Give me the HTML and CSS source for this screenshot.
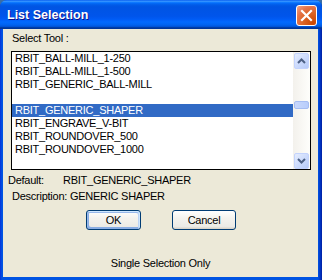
FILE: index.html
```html
<!DOCTYPE html>
<html>
<head>
<meta charset="utf-8">
<link rel="stylesheet" href="styles.css">
</head>
<body>
<div class="window">
  <div class="titlebar">
    <span class="title">List Selection</span>
    <div class="close">
      <svg width="13" height="13" viewBox="0 0 13 13"><path d="M2 2 L11 11 M11 2 L2 11" stroke="#fff" stroke-width="2.2" stroke-linecap="square"/></svg>
    </div>
  </div>
  <div class="content">
    <div class="label">Select Tool :</div>
    <div class="listbox">
      <div class="rows">
        <div class="row">RBIT_BALL-MILL_1-250</div>
        <div class="row">RBIT_BALL-MILL_1-500</div>
        <div class="row">RBIT_GENERIC_BALL-MILL</div>
        <div class="row"></div>
        <div class="row selected">RBIT_GENERIC_SHAPER</div>
        <div class="row">RBIT_ENGRAVE_V-BIT</div>
        <div class="row">RBIT_ROUNDOVER_500</div>
        <div class="row">RBIT_ROUNDOVER_1000</div>
      </div>
      <div class="scrollbar">
        <div class="sbtn">
          <svg width="9" height="6" viewBox="0 0 9 6"><path d="M1 5 L4.5 1.5 L8 5" fill="none" stroke="#4d6185" stroke-width="2"/></svg>
        </div>
        <div class="track">
          <div class="thumb"></div>
        </div>
        <div class="sbtn">
          <svg width="9" height="6" viewBox="0 0 9 6"><path d="M1 1 L4.5 4.5 L8 1" fill="none" stroke="#4d6185" stroke-width="2"/></svg>
        </div>
      </div>
    </div>
    <div class="info default-row"><span class="dlabel">Default:</span><span>RBIT_GENERIC_SHAPER</span></div>
    <div class="info desc-row">Description: GENERIC SHAPER</div>
    <div class="buttons">
      <button class="btn ok">OK</button>
      <button class="btn cancel">Cancel</button>
    </div>
    <div class="footer">Single Selection Only</div>
  </div>
</div>
</body>
</html>
```
FILE: styles.css
```css
html, body {
  margin: 0;
  padding: 0;
  background: #3a6ea5;
}
body {
  width: 322px;
  height: 280px;
  overflow: hidden;
  font-family: "Liberation Sans", Arial, sans-serif;
  font-size: 11px;
  letter-spacing: -0.25px;
  color: #000;
}
.window {
  width: 322px;
  height: 280px;
  box-sizing: border-box;
  display: flex;
  flex-direction: column;
  background: linear-gradient(to right, #0831d9 0px, #0054e3 2px, #0054e3 318px, #0038c8 320px, #001ea0 322px);
  border-radius: 7px 7px 0 0;
  overflow: hidden;
}
.titlebar {
  height: 29px;
  flex: none;
  display: flex;
  align-items: center;
  justify-content: space-between;
  padding: 0 5px 0 7px;
  background: linear-gradient(to bottom, #0058ee 0%, #3a93ff 4%, #288eff 6%, #127dff 8%, #036ffc 10%, #0262ee 14%, #0057e5 20%, #0054e3 24%, #0055eb 56%, #005bf5 66%, #026afe 76%, #0062ef 86%, #0052d6 92%, #0040ab 94%, #003092 100%);
}
.title {
  color: #fff;
  font-weight: bold;
  font-size: 12.5px;
  letter-spacing: 0;
  text-shadow: 1px 1px #0f1089;
  margin-top: 1px;
}
.close {
  width: 19px;
  height: 19px;
  margin-top: 1px;
  border: 1px solid #fff;
  border-radius: 3px;
  background: radial-gradient(circle at 85% 90%, #cc4600 0%, #dc6527 45%, #e5744a 70%, #f2a58a 100%);
  display: flex;
  align-items: center;
  justify-content: center;
}
.content {
  flex: 1;
  margin: 0 4px 3px 3px;
  background: #ece9d8;
  display: flex;
  flex-direction: column;
  align-items: flex-start;
}
.label {
  line-height: 13px;
  margin: 3px 0 0 9px;
}
.listbox {
  margin: 6px 0 0 8px;
  width: 300px;
  height: 119px;
  box-sizing: border-box;
  border: 1px solid #000;
  background: #fff;
  display: flex;
}
.rows {
  flex: 1;
  display: flex;
  flex-direction: column;
}
.row {
  height: 13px;
  line-height: 13px;
  padding-left: 3px;
  white-space: nowrap;
}
.row.selected {
  background: #316ac5;
  color: #fff;
}
.scrollbar {
  width: 17px;
  flex: none;
  display: flex;
  flex-direction: column;
  background: linear-gradient(to right, #f3f1ec, #fefefb);
}
.sbtn {
  width: 15px;
  height: 16px;
  margin: 1px 0 0 1px;
  box-sizing: border-box;
  border: 1px solid #c3d3fd;
  border-radius: 2px;
  background: linear-gradient(135deg, #e5edfe 0%, #cddbfc 50%, #b6cbf9 100%);
  display: flex;
  align-items: center;
  justify-content: center;
  flex: none;
}
.sbtn:last-child {
  margin: 0 0 0 1px;
}
.track {
  flex: 1;
  position: relative;
}
.thumb {
  position: absolute;
  left: 1px;
  top: 32px;
  width: 15px;
  height: 8px;
  box-sizing: border-box;
  border: 1px solid #a6bdf2;
  border-radius: 2px;
  background: linear-gradient(to right, #c9d8fc, #b8cdfb);
}
.info {
  line-height: 13px;
  white-space: nowrap;
}
.default-row {
  margin: 4px 0 0 5px;
  display: flex;
}
.dlabel {
  width: 55px;
}
.desc-row {
  margin: 3px 0 0 9px;
}
.buttons {
  margin-top: 7px;
  display: flex;
  padding-left: 83px;
  gap: 31px;
}
.btn {
  height: 20px;
  box-sizing: border-box;
  border: 1px solid #003c74;
  border-radius: 3px;
  background: linear-gradient(to bottom, #ffffff 0%, #f4f3ee 40%, #ecebe6 86%, #d6d0c5 100%);
  font-family: "Liberation Sans", Arial, sans-serif;
  font-size: 11px;
  letter-spacing: -0.25px;
  color: #000;
  padding: 0;
}
.ok {
  width: 55px;
  box-shadow: inset -1px 1px #cee7ff, inset 1px 2px #98b8ea, inset -2px 2px #bcd4f6, inset 1px -1px #89ade4, inset 2px -2px #89ade4;
}
.cancel {
  width: 64px;
}
.footer {
  align-self: stretch;
  text-align: center;
  line-height: 13px;
  margin-top: 27px;
}
```
